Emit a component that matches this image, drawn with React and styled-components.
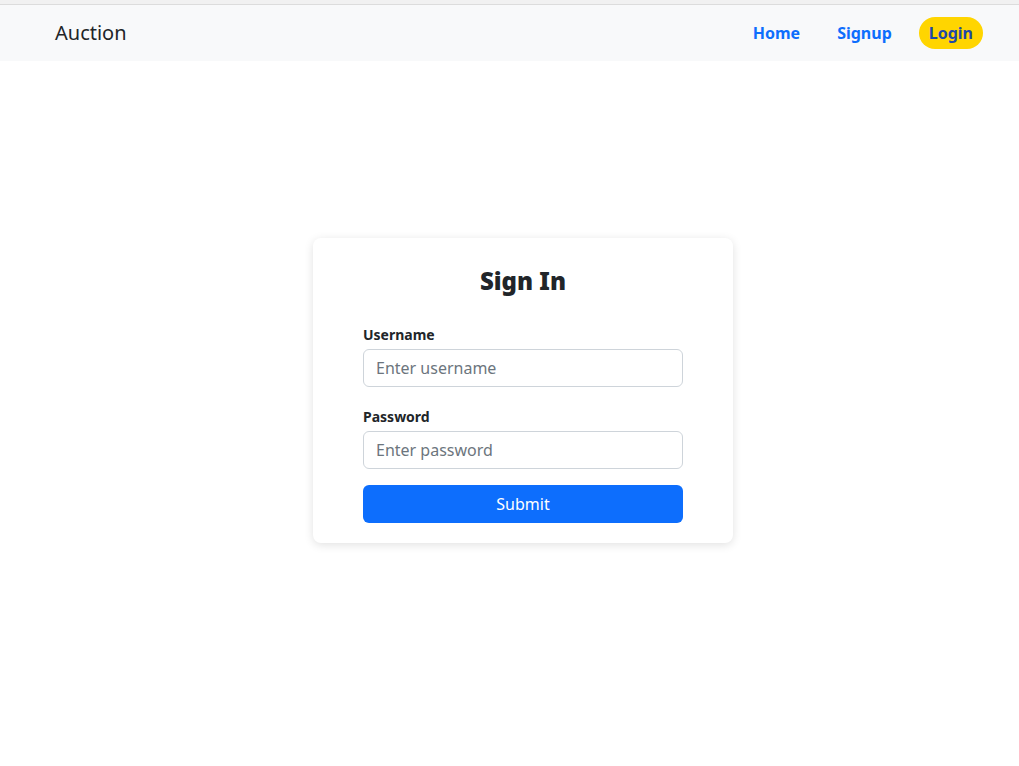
import React from "react";
import styled, { createGlobalStyle } from "styled-components";

const Global = createGlobalStyle`
  html, body { margin: 0; padding: 0; background: #fff; }
  body { font-family: "Noto Sans", "Open Sans", sans-serif; color: #212529; }
  * { box-sizing: border-box; }
`;

const TopStrip = styled.div`
  height: 5px;
  background: #f1f1f1;
  border-bottom: 1px solid #dcdcdc;
`;

const Navbar = styled.nav`
  height: 56px;
  background: #f8f9fa;
  display: flex;
  align-items: center;
  justify-content: space-between;
  padding: 0 36px 0 55px;
`;

const Brand = styled.a`
  font-size: 20px;
  line-height: 28px;
  margin-top: -1px;
  color: #212529;
  text-decoration: none;
`;

const NavList = styled.div`
  display: flex;
  align-items: center;
  gap: 17px;
`;

const NavLink = styled.a`
  font-size: 16px;
  font-weight: 700;
  text-decoration: none;
  padding: 0 10px;
  line-height: 32px;
  height: 32px;
  border-radius: 16px;
  color: ${(p) => (p.$active ? "#1f48a8" : "#0d6efd")};
  background: ${(p) => (p.$active ? "#ffd500" : "transparent")};
`;

const Main = styled.main`
  display: flex;
  justify-content: center;
  padding: 177px 0 40px 27px;
`;

const Card = styled.div`
  width: 420px;
  background: #fff;
  border-radius: 8px;
  box-shadow: 0 2px 10px rgba(0, 0, 0, 0.12);
  padding: 28px 50px 20px;
`;

const Title = styled.h2`
  margin: 0 0 29px;
  text-align: center;
  font-size: 24px;
  font-weight: 900;
  line-height: 29px;
  color: #212529;
`;

const Field = styled.div`
  margin-bottom: ${(p) => p.$mb}px;
`;

const Label = styled.label`
  display: block;
  font-size: 14px;
  font-weight: 700;
  line-height: 21px;
  margin-bottom: 4px;
`;

const Input = styled.input`
  display: block;
  width: 100%;
  height: 38px;
  padding: 6px 12px;
  font-family: inherit;
  font-size: 16px;
  color: #212529;
  border: 1px solid #ced4da;
  border-radius: 6px;
  outline: none;
  &::placeholder { color: #6c757d; }
`;

const Submit = styled.button`
  display: block;
  width: 100%;
  height: 38px;
  border: none;
  border-radius: 6px;
  background: #0d6efd;
  color: #fff;
  font-family: inherit;
  font-size: 16px;
  cursor: pointer;
`;

export default function App() {
  return (
    <>
      <Global />
      <TopStrip />
      <Navbar>
        <Brand href="#">Auction</Brand>
        <NavList>
          <NavLink href="#">Home</NavLink>
          <NavLink href="#">Signup</NavLink>
          <NavLink href="#" $active>Login</NavLink>
        </NavList>
      </Navbar>
      <Main>
        <Card>
          <Title>Sign In</Title>
          <Field $mb={19}>
            <Label>Username</Label>
            <Input placeholder="Enter username" />
          </Field>
          <Field $mb={16}>
            <Label>Password</Label>
            <Input type="password" placeholder="Enter password" />
          </Field>
          <Submit>Submit</Submit>
        </Card>
      </Main>
    </>
  );
}
